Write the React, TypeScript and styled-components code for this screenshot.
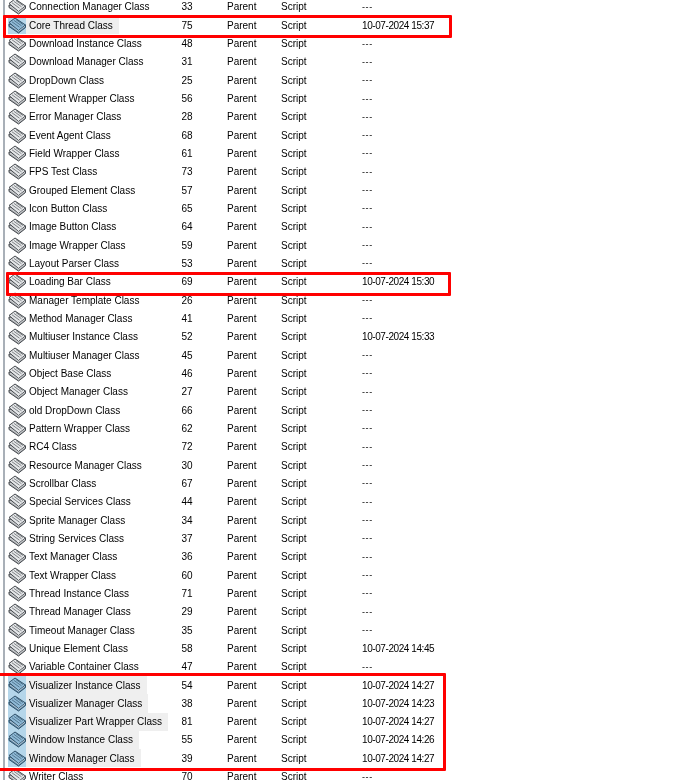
import React from 'react'
import styled, {createGlobalStyle} from 'styled-components'

const GlobalStyle = createGlobalStyle`
    html, body {
        margin: 0;
        padding: 0;
        background: #ffffff;
    }
`

const Page = styled.div`
    position: relative;
    width: 698px;
    height: 780px;
    overflow: hidden;
    background: #ffffff;
    font-family: 'Liberation Sans', Arial, sans-serif;
    font-size: 10px;
    color: #000000;
`

// the source shot is a scaled-down capture, so everything is a little soft
const List = styled.div`
    margin-top: -2.3px;
    margin-left: 3px;
    padding-left: 3px;
    border-left: 2px solid #a9b0b8;
    filter: blur(0.3px);
`

const Row = styled.div`
    display: grid;
    grid-template-columns: 168px 51px 54px 81px auto;
    height: 18.333px;
    align-items: center;
    white-space: nowrap;
`

const NameCell = styled.div`
    display: flex;
    align-items: center;
    height: 100%;
`

const IconBox = styled.span<{$selected: boolean}>`
    display: flex;
    align-items: center;
    justify-content: center;
    width: 18px;
    height: 100%;
    flex: none;
    background: ${p => (p.$selected ? '#b5d6ea' : 'transparent')};
`

const Label = styled.span<{$selected: boolean}>`
    display: flex;
    align-items: center;
    height: 100%;
    padding: 0 6px 0 3px;
    background: ${p => (p.$selected ? '#efefef' : 'transparent')};
`

const Num = styled.div`
    text-align: center;
    width: 22px;
`

const DateCell = styled.div<{$empty: boolean}>`
    letter-spacing: ${p => (p.$empty ? '0.6px' : '-0.42px')};
    font-size: ${p => (p.$empty ? '9px' : '10px')};
`

const Highlight = styled.div<{$top: number; $left: number; $width: number; $height: number}>`
    position: absolute;
    top: ${p => p.$top}px;
    left: ${p => p.$left}px;
    width: ${p => p.$width}px;
    height: ${p => p.$height}px;
    box-sizing: border-box;
    border: 3px solid #ff0000;
    border-radius: 1px;
`

const ClassIcon: React.FC<{selected: boolean}> = ({selected}) => {
    const edge = selected ? '#2f5068' : '#44484d'
    const face = selected ? '#8fb9d6' : '#e4e6e8'
    const side = selected ? '#5f88a6' : '#a4a8ac'
    return (
        <svg width="18" height="17" viewBox="0 0 18 17">
            <path d="M1 7 L1 9.5 L10.5 16 L17.5 10.5 L17.5 8 Z" fill={side} stroke={edge} strokeWidth="1" />
            <path d="M1 5.5 L7 1 L17.5 8 L10.5 13.5 Z" fill={face} stroke={edge} strokeWidth="1" />
            <path d="M4 4.8 L11.5 10.2 M6 3.4 L13.5 8.8 M8 2.6 L15 7.6" stroke={edge} strokeWidth="0.9" opacity="0.7" />
            <path d="M2 8 L10.5 14.2 L17 9.2" fill="none" stroke="#ffffff" strokeWidth="0.7" opacity="0.8" />
        </svg>
    )
}

type Item = [string, number, string?, boolean?]

const items: Item[] = [
    ['Connection Manager Class', 33],
    ['Core Thread Class', 75, '10-07-2024 15:37', true],
    ['Download Instance Class', 48],
    ['Download Manager Class', 31],
    ['DropDown Class', 25],
    ['Element Wrapper Class', 56],
    ['Error Manager Class', 28],
    ['Event Agent Class', 68],
    ['Field Wrapper Class', 61],
    ['FPS Test Class', 73],
    ['Grouped Element Class', 57],
    ['Icon Button Class', 65],
    ['Image Button Class', 64],
    ['Image Wrapper Class', 59],
    ['Layout Parser Class', 53],
    ['Loading Bar Class', 69, '10-07-2024 15:30'],
    ['Manager Template Class', 26],
    ['Method Manager Class', 41],
    ['Multiuser Instance Class', 52, '10-07-2024 15:33'],
    ['Multiuser Manager Class', 45],
    ['Object Base Class', 46],
    ['Object Manager Class', 27],
    ['old DropDown Class', 66],
    ['Pattern Wrapper Class', 62],
    ['RC4 Class', 72],
    ['Resource Manager Class', 30],
    ['Scrollbar Class', 67],
    ['Special Services Class', 44],
    ['Sprite Manager Class', 34],
    ['String Services Class', 37],
    ['Text Manager Class', 36],
    ['Text Wrapper Class', 60],
    ['Thread Instance Class', 71],
    ['Thread Manager Class', 29],
    ['Timeout Manager Class', 35],
    ['Unique Element Class', 58, '10-07-2024 14:45'],
    ['Variable Container Class', 47],
    ['Visualizer Instance Class', 54, '10-07-2024 14:27', true],
    ['Visualizer Manager Class', 38, '10-07-2024 14:23', true],
    ['Visualizer Part Wrapper Class', 81, '10-07-2024 14:27', true],
    ['Window Instance Class', 55, '10-07-2024 14:26', true],
    ['Window Manager Class', 39, '10-07-2024 14:27', true],
    ['Writer Class', 70],
]

const App: React.FC = () => {
    return (
        <Page>
            <GlobalStyle />
            <List>
                {items.map(([name, id, date, selected]) => (
                    <Row key={name}>
                        <NameCell>
                            <IconBox $selected={!!selected}>
                                <ClassIcon selected={!!selected} />
                            </IconBox>
                            <Label $selected={!!selected}>{name}</Label>
                        </NameCell>
                        <Num>{id}</Num>
                        <div>Parent</div>
                        <div>Script</div>
                        <DateCell $empty={!date}>{date || '---'}</DateCell>
                    </Row>
                ))}
            </List>
            <Highlight $top={15} $left={3} $width={449} $height={23} />
            <Highlight $top={272} $left={6} $width={445} $height={24} />
            <Highlight $top={673} $left={-4} $width={450} $height={98} />
        </Page>
    )
}

export default App
